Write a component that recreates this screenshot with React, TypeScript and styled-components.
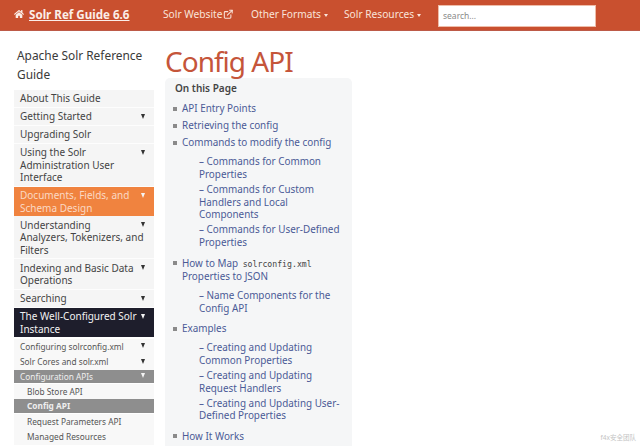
import React from "react";
import styled, { createGlobalStyle } from "styled-components";
import { FaHome } from "react-icons/fa";
import { ExternalLink } from "lucide-react";

const Global = createGlobalStyle`
  html, body { margin: 0; padding: 0; width: 640px; height: 446px; overflow: hidden; background: #fff; }
  body { font-family: "Noto Sans", "Noto Sans CJK SC", sans-serif; }
  * { box-sizing: border-box; }
`;
const Page = styled.div`width: 640px; height: 446px; overflow: hidden; position: relative;`;
const TopBar = styled.header`
  height: 31px; background: #c9502f; border-bottom: 1px solid #bd5a48;
  display: flex; align-items: center; padding: 0 0 2px 14px; color: #f6ddd2;
`;
const Brand = styled.a`
  width: 149px; display: flex; align-items: center; gap: 5px; color: #fbeee8;
  font-size: 11.6px; font-weight: 700; text-decoration: underline;
`;
const NavLink = styled.a<{ $w: number }>`
  width: ${p => p.$w}px; display: flex; align-items: center; gap: 1px;
  font-size: 10.2px; color: #f9e4da; white-space: nowrap;
`;
const NavCaret = styled.i`
  display: inline-block; margin: 2px 0 0 2px; border-left: 2.5px solid transparent;
  border-right: 2.5px solid transparent; border-top: 3px solid #f9e4da;
`;
const Search = styled.div`
  width: 158px; height: 22px; background: #fff; border: 1px solid #eebda9;
  padding: 0 4px; display: flex; align-items: center; font-size: 8.5px; color: #8a8a8a;
  margin: 3px 0 0 0;
`;
const Body = styled.div`display: flex; padding: 14px 0 0 14px; align-items: flex-start;`;
const Side = styled.nav`width: 140px; flex: none; margin-right: 11px;`;
const SideTitle = styled.div`font-size: 11.9px; line-height: 19px; color: #3a3a3a; padding: 1px 0 5.5px 3px;`;
const Row = styled.div<{ $variant?: string }>`
  display: flex; justify-content: space-between; font-size: 10px; line-height: 12.4px;
  padding: 2.6px 9px 2.1px 6px; white-space: nowrap;
  background: ${p => p.$variant === "orange" ? "#f0833f" : p.$variant === "dark" ? "#1e1e2c" : "#f5f5f5"};
  color: ${p => p.$variant === "orange" ? "#fbd9c4" : p.$variant === "dark" ? "#f2f2f2" : "#444"};
  border-bottom: ${p => p.$variant ? "0" : "0.5px solid #fdfdfd"};
  margin-bottom: ${p => p.$variant === "dark" ? "1.5px" : "0"};
  & > span { flex: 1; min-width: 0; }
`;
const SubRow = styled.div<{ $active?: boolean; $indent?: boolean; $bold?: boolean }>`
  display: flex; justify-content: space-between; font-size: 8.3px; line-height: 13.5px;
  padding: ${p => p.$active ? "0" : "1px"} 9px ${p => p.$active ? "0" : "1px"} ${p => p.$indent ? 13 : 6}px;
  background: ${p => p.$active ? "#8e8e8e" : "#f8f8f8"};
  color: ${p => p.$active ? "#eeeeee" : "#555"};
  font-weight: ${p => p.$bold ? 700 : 400};
  margin-bottom: ${p => p.$active ? "0.8px" : "0"};
`;
const Caret = styled.i<{ $light?: boolean }>`
  flex: none; width: 0; height: 0; margin-top: 3.5px;
  border-left: 2.5px solid transparent; border-right: 2.5px solid transparent;
  border-top: 5px solid ${p => p.$light ? "#f4f4f4" : "#333"};
`;
const Main = styled.main`width: 187px; flex: none;`;
const Title = styled.h1`
  margin: 0; font-size: 28px; line-height: 33px; font-weight: 400; color: #c5553a;
  white-space: nowrap; letter-spacing: -1px;
`;
const Toc = styled.div`
  background: #f5f6f7; border-radius: 5px; padding: 3px 8px 8px 10px; height: 400px;
`;
const TocHead = styled.div`font-size: 10px; font-weight: 600; line-height: 15px; color: #444; margin-bottom: 4px;`;
const List = styled.ul`margin: 0; padding: 0; list-style: none; font-size: 9.9px; line-height: 12.5px; color: #4a5a96;`;
const Item = styled.li`
  position: relative; padding: 2.3px 0 2.3px 7px;
  &::before {
    content: ""; position: absolute; left: -2px; top: 6.5px; width: 4px; height: 4px; background: #8a8a8a;
  }
`;
const SubList = styled.ul`
  margin: 6.5px 0 1.2px 0; padding: 0 0 0 17px; list-style: none;
`;
const SubItem = styled.li`padding-bottom: 2.6px;`;
const Mono = styled.code`font-family: "DejaVu Sans Mono", monospace; font-size: 8.2px; color: #444; margin-left: 2px;`;
const Mark = styled.div`position: absolute; right: 4px; bottom: 4px; font-size: 6.5px; color: #c4c4c4;`;

const C = ({ light }: { light?: boolean }) => <Caret $light={light} />;

export default function App() {
  return (
    <Page>
      <Global />
      <TopBar>
        <Brand><FaHome size={10} />Solr Ref Guide 6.6</Brand>
        <NavLink $w={88}>Solr Website<ExternalLink size={10.5} strokeWidth={2.4} /></NavLink>
        <NavLink $w={93}>Other Formats<NavCaret /></NavLink>
        <NavLink $w={94}>Solr Resources<NavCaret /></NavLink>
        <Search>search...</Search>
      </TopBar>
      <Body>
        <Side>
          <SideTitle>Apache Solr Reference Guide</SideTitle>
          <Row><span>About This Guide</span></Row>
          <Row><span>Getting Started</span><C /></Row>
          <Row><span>Upgrading Solr</span></Row>
          <Row><span>Using the Solr<br />Administration User<br />Interface</span><C /></Row>
          <Row $variant="orange"><span>Documents, Fields, and<br />Schema Design</span><C light /></Row>
          <Row><span>Understanding<br />Analyzers, Tokenizers, and<br />Filters</span><C /></Row>
          <Row><span>Indexing and Basic Data<br />Operations</span><C /></Row>
          <Row><span>Searching</span><C /></Row>
          <Row $variant="dark"><span>The Well-Configured Solr<br />Instance</span><C light /></Row>
          <SubRow><span>Configuring solrconfig.xml</span><C /></SubRow>
          <SubRow><span>Solr Cores and solr.xml</span><C /></SubRow>
          <SubRow $active><span>Configuration APIs</span><C light /></SubRow>
          <SubRow $indent><span>Blob Store API</span></SubRow>
          <SubRow $indent $active $bold><span>Config API</span></SubRow>
          <SubRow $indent><span>Request Parameters API</span></SubRow>
          <SubRow $indent><span>Managed Resources</span></SubRow>
        </Side>
        <Main>
          <Title>Config API</Title>
          <Toc>
            <TocHead>On this Page</TocHead>
            <List>
              <Item>API Entry Points</Item>
              <Item>Retrieving the config</Item>
              <Item>Commands to modify the config
                <SubList>
                  <SubItem>– Commands for Common Properties</SubItem>
                  <SubItem>– Commands for Custom Handlers and Local Components</SubItem>
                  <SubItem>– Commands for User-Defined Properties</SubItem>
                </SubList>
              </Item>
              <Item>How to Map <Mono>solrconfig.xml</Mono> Properties to JSON
                <SubList>
                  <SubItem>– Name Components for the Config API</SubItem>
                </SubList>
              </Item>
              <Item>Examples
                <SubList>
                  <SubItem>– Creating and Updating Common Properties</SubItem>
                  <SubItem>– Creating and Updating Request Handlers</SubItem>
                  <SubItem>– Creating and Updating User-Defined Properties</SubItem>
                </SubList>
              </Item>
              <Item>How It Works</Item>
            </List>
          </Toc>
        </Main>
      </Body>
      <Mark>f4x安全团队</Mark>
    </Page>
  );
}
